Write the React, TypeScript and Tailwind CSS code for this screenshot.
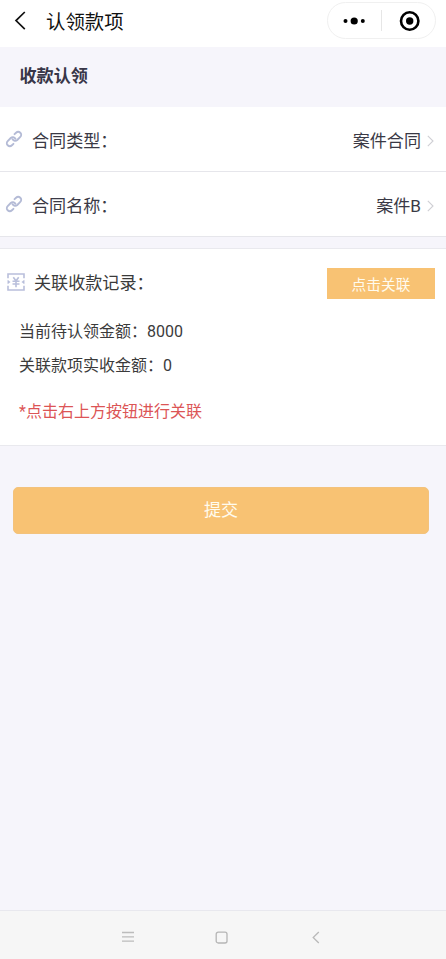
import type { ReactNode } from "react";

function LinkIcon() {
  return (
    <svg className="h-[18px] w-[18px] shrink-0" viewBox="0 0 18 18" fill="none" stroke="#b4bbd6" strokeWidth="1.9" strokeLinecap="round" strokeLinejoin="round">
      <g transform="translate(9 9) rotate(-45)">
        <path d="M-3.8 3H-5.9a3 3 0 0 1 0-6H-1.6a3 3 0 0 1 2.8 3.8" />
        <path d="M3.8-3H5.9a3 3 0 0 1 0 6H1.6a3 3 0 0 1-2.8-3.8" />
      </g>
    </svg>
  );
}

function MoneyIcon() {
  return (
    <svg className="h-[18px] w-[18px] shrink-0" viewBox="0 0 18 18" fill="none" stroke="#b9bfdb" strokeWidth="1.6">
      <path d="M1 5.2V1h16v4.2M1 12.8V17h16v-4.2" />
      <path d="M.8 7.2 3.2 9 .8 10.8ZM17.2 7.2 14.8 9l2.4 1.8Z" fill="#b9bfdb" strokeWidth=".5" />
      <path d="m6.3 4.2 2.7 3.6 2.7-3.6M9 7.8v6.4M5.5 8.3h7M5.5 11h7" />
    </svg>
  );
}

function Row({ label, value }: { label: string; value: ReactNode }) {
  return (
    <div className="flex h-[65px] shrink-0 items-center border-b border-[#e6e6eb] bg-white pl-[5px] pr-[12px] text-[17.1px] text-[#3a3945]">
      <LinkIcon />
      <span className="ml-[9px] pt-[5px]">{label}</span>
      <span className="ml-auto pt-[5px]">{value}</span>
      <svg className="ml-[6px] mt-[4px] h-[12px] w-[7px]" viewBox="0 0 7 12" fill="none" stroke="#cfcfd4" strokeWidth="1.1">
        <path d="m.8.8 5.2 5.2-5.2 5.2" />
      </svg>
    </div>
  );
}

export default function App() {
  return (
    <div className="flex h-[959px] w-[446px] flex-col overflow-hidden bg-[#f6f5fb] font-[Roboto,'Noto_Sans_CJK_SC',sans-serif]">
      <header className="flex h-[47px] shrink-0 items-start bg-white pl-[14px] pr-[10px]">
        <svg className="mt-[11px] h-[19px] w-[12px]" viewBox="0 0 12 19" fill="none" stroke="#111" strokeWidth="1.7">
          <path d="M10.8 1 2 9.6l8.8 8.6" />
        </svg>
        <h1 className="ml-[20px] mt-[9px] text-[19.4px] leading-[28px] text-[#111]">认领款项</h1>
        <div className="ml-auto mt-[2px] flex h-[37px] w-[109px] items-center rounded-full border border-[#f0f0f0]">
          <svg className="h-[35px] w-[107px]" viewBox="0 0 107 35">
            <circle cx="17.5" cy="18" r="2" />
            <circle cx="26.2" cy="18" r="3.6" />
            <circle cx="34.8" cy="18" r="2" />
            <path d="M53.5 7v21" stroke="#e6e6e6" />
            <circle cx="81.7" cy="18" r="8.7" fill="none" stroke="#000" strokeWidth="2.6" />
            <circle cx="81.7" cy="18" r="3.7" />
          </svg>
        </div>
      </header>

      <h2 className="h-[60px] shrink-0 pl-[19.5px] text-[17.1px] font-bold leading-[59px] text-[#383648]">收款认领</h2>

      <Row label="合同类型：" value="案件合同" />
      <Row label="合同名称：" value="案件B" />

      <section className="mt-[11px] h-[198px] shrink-0 border-y border-[#e9e9ee] bg-white text-[16px] text-[#3b3b3b]">
        <div className="flex items-start pl-[7px] pr-[11px]">
          <div className="mt-[24px]">
            <MoneyIcon />
          </div>
          <span className="ml-[9px] mt-[22px] text-[17.1px] leading-[24px]">关联收款记录：</span>
          <button className="ml-auto mt-[19px] h-[31px] w-[108px] bg-[#f8c273] pt-[3px] text-[14.7px] text-[#fffbee]">点击关联</button>
        </div>
        <p className="mt-[21px] pl-[19px] leading-[24px]">当前待认领金额：8000</p>
        <p className="mt-[10px] pl-[19px] leading-[24px]">关联款项实收金额：0</p>
        <p className="mt-[22px] pl-[19px] leading-[24px] text-[#dc5556]">*点击右上方按钮进行关联</p>
      </section>

      <button className="ml-[13px] mt-[41px] h-[47px] w-[416px] shrink-0 rounded-[5px] border border-[#f3c27c] bg-[#f8c273] text-[17.1px] text-[#fffbee]">
        提交
      </button>

      <nav className="mt-auto flex h-[49px] shrink-0 items-center border-t border-[#e8e8ee] bg-[#f6f6f6] pt-[4px]">
        <svg className="ml-[122px] h-[12px] w-[12px]" viewBox="0 0 12 12" stroke="#bcbcbc" strokeWidth="1.3">
          <path d="M0 1.5h12M0 5.8h12M0 10.2h12" />
        </svg>
        <svg className="ml-[81px] h-[13px] w-[13px]" viewBox="0 0 13 13" fill="none" stroke="#b5b5b5" strokeWidth="1.3">
          <rect x="1.2" y="1.2" width="10.8" height="10.8" rx="2" />
        </svg>
        <svg className="ml-[84px] h-[13px] w-[8px]" viewBox="0 0 8 13" fill="none" stroke="#b9b9b9" strokeWidth="1.3">
          <path d="M6.8 1 1.2 6.5 6.8 12" />
        </svg>
      </nav>
    </div>
  );
}
